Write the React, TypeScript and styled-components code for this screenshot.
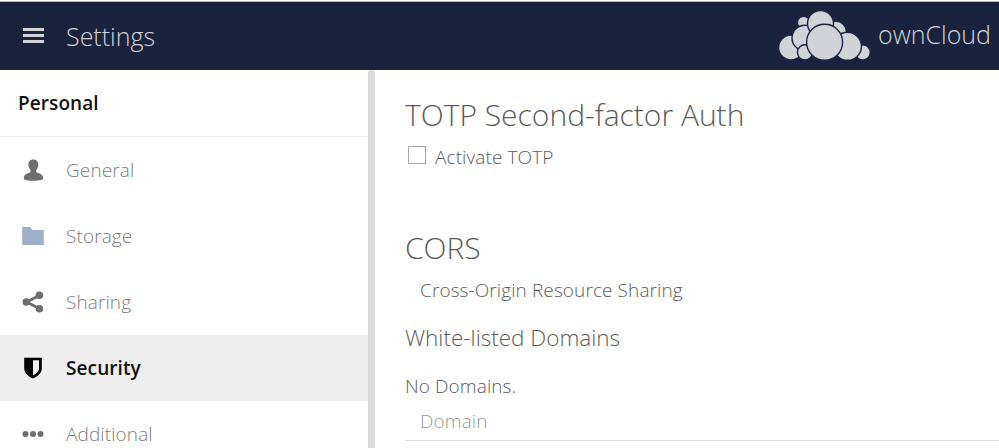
import React from "react";
import styled, { createGlobalStyle } from "styled-components";

const Global = createGlobalStyle`
  * { box-sizing: border-box; }
  body {
    margin: 0;
    background: #fff;
    overflow: hidden;
    font-family: "Open Sans", sans-serif;
    font-weight: 300;
  }
`;

const Page = styled.div`
  height: 448px;
  overflow: hidden;
  display: flex;
  flex-direction: column;
`;

const Header = styled.header`
  height: 70px;
  flex: none;
  background: #1b223d;
  border-top: 1px solid #fff;
  box-shadow: inset 0 1px 0 #b0b8c2;
  display: flex;
  align-items: center;
  color: #d2d3d8;
  padding: 1px 0 0 23px;
`;

const MenuButton = styled.button`
  width: 21px;
  height: 15px;
  margin-bottom: 1px;
  padding: 0;
  border: 0;
  background: none;
  display: flex;
  flex-direction: column;
  justify-content: space-between;
`;

const MenuBar = styled.span`
  width: 21px;
  height: 3px;
  background: #d2d3d8;
`;

const Title = styled.span`
  font-size: 25px;
  line-height: 34px;
  margin-left: 22px;
  flex: 1;
`;

const Brand = styled.div`
  display: flex;
  align-items: center;
  width: 220px;
  gap: 8px;
  white-space: nowrap;
`;

const BrandName = styled.span`
  font-size: 25px;
  line-height: 34px;
  padding-bottom: 4px;
`;

const Logo = styled.svg`
  width: 91px;
  height: 52px;
  flex: none;
  fill: #d2d3d8;
  stroke: #1b223d;
  stroke-width: 1.4;
`;

const Body = styled.div`
  flex: 1;
  display: flex;
  min-height: 0;
`;

const Sidebar = styled.nav`
  width: 368px;
  flex: none;
  overflow: hidden;
`;

const Group = styled.div`
  height: 67px;
  border-bottom: 1px solid #eee;
  padding-left: 18px;
  font-size: 19px;
  letter-spacing: 0.08px;
  line-height: 66px;
  font-weight: 600;
  color: #111;
`;

const Item = styled.a<{ $active?: boolean }>`
  height: 66px;
  display: flex;
  align-items: center;
  gap: 22px;
  padding-left: 22px;
  font-size: 19px;
  letter-spacing: 0.1px;
  color: ${p => (p.$active ? "#111" : "#7c7c7c")};
  font-weight: ${p => (p.$active ? 600 : 300)};
  background: ${p => (p.$active ? "#eee" : "transparent")};
`;

const Icon = styled.svg`
  width: 22px;
  height: 22px;
  flex: none;
  fill: #6e6e6e;
`;

const Divider = styled.div`
  width: 7px;
  flex: none;
  background: #dcdcdc;
  border-radius: 3px 3px 0 0;
`;

const Main = styled.main`
  flex: 1;
  padding: 24px 0 0 30px;
  color: #5c5c5c;
  font-size: 19px;
  letter-spacing: 0.1px;
  line-height: 26px;
`;

const Heading = styled.h2`
  margin: 0;
  font-weight: 300;
  font-size: 30px;
  letter-spacing: 0;
  line-height: 42px;
`;

const SubHeading = styled.h3`
  margin: 19px 0 0;
  font-weight: 300;
  font-size: 22.5px;
  letter-spacing: 0;
  line-height: 32px;
`;

const CheckRow = styled.label`
  display: flex;
  align-items: center;
  margin-top: 8px;
  gap: 9px;
  padding-left: 3px;
`;

const Box = styled.span`
  width: 18px;
  height: 18px;
  border: 1px solid #a6a6a6;
  margin-bottom: 4px;
`;

const Cors = styled.section`
  margin-top: 57px;
`;

const Description = styled.p`
  margin: 8px 0 0 15px;
`;

const Empty = styled.p`
  margin: 19px 0 0;
`;

const Domain = styled.input`
  display: block;
  width: 100%;
  height: 42px;
  padding: 2px 15px 0;
  border: 0;
  border-bottom: 1px solid #dcdcdc;
  outline: 0;
  background: none;
  font: inherit;
  letter-spacing: inherit;
  &::placeholder { color: #999; opacity: 1; }
`;

export default function App() {
  return (
    <Page>
      <Global />
      <Header>
        <MenuButton aria-label="Menu"><MenuBar /><MenuBar /><MenuBar /></MenuButton>
        <Title>Settings</Title>
        <Brand>
          <Logo viewBox="779 10 91 52">
            <circle cx="803.7" cy="22.5" r="6.3" />
            <circle cx="835.5" cy="32" r="11" />
            <circle cx="791" cy="47.5" r="12.4" />
            <circle cx="804.8" cy="38" r="12.8" />
            <circle cx="820.5" cy="23.5" r="13" />
            <circle cx="862.7" cy="52.3" r="7.6" />
            <circle cx="847.5" cy="46.3" r="14" />
            <circle cx="805" cy="52.3" r="7.6" />
            <circle cx="824.6" cy="42.3" r="18" />
          </Logo>
          <BrandName>ownCloud</BrandName>
        </Brand>
      </Header>
      <Body>
        <Sidebar>
          <Group>Personal</Group>
          <Item>
            <Icon viewBox="0 0 22 22">
              <path d="M11.3.4c3.2 0 5 2.1 5 5.2 0 2.5-.8 4-1.8 5.3-.4.6-.4 1.8.2 2.3 1.8 1.2 6.500 1.600 6.500 6 0 1.200-1.600 2.500-9.900 2.500s-9.500-1.300-9.500-2.500c0-4.400 4.600-4.800 6.300-6 .6-.5.6-1.7.2-2.3-1.1-1.3-1.900-2.800-1.900-5.300C6.400 2.500 8.200.4 11.300.4z" />
            </Icon>
            General
          </Item>
          <Item>
            <Icon viewBox="0 0 22 22"><path fill="#a0afc8" d="M.2 2h8.100l2 3H21.800v15H.2V2z" /></Icon>
            Storage
          </Item>
          <Item>
            <Icon viewBox="0 0 22 22">
              <path d="M17.5 4.500 4.500 11l13 6.500" fill="none" stroke="#6e6e6e" strokeWidth="3" />
              <circle cx="17.4" cy="4.3" r="3.8" />
              <circle cx="4.3" cy="11" r="3.8" />
              <circle cx="17.4" cy="17.8" r="3.8" />
            </Icon>
            Sharing
          </Item>
          <Item $active>
            <Icon viewBox="0 0 22 22">
              <path fill="#000" fillRule="evenodd" d="M2.2.7h17.6v11c0 4.500-4.500 7.500-8.800 9.800C6.700 19.200 2.200 16.200 2.200 11.700zM11 3.200v15.200c3-1.800 6-3.900 6-7.200v-8z" />
            </Icon>
            Security
          </Item>
          <Item>
            <Icon viewBox="0 0 22 22">
              <circle cx="3.5" cy="11" r="3" />
              <circle cx="11" cy="11" r="3" />
              <circle cx="18.5" cy="11" r="3" />
            </Icon>
            Additional
          </Item>
        </Sidebar>
        <Divider />
        <Main>
          <Heading>TOTP Second-factor Auth</Heading>
          <CheckRow><Box />Activate TOTP</CheckRow>
          <Cors>
            <Heading>CORS</Heading>
            <Description>Cross-Origin Resource Sharing</Description>
            <SubHeading>White-listed Domains</SubHeading>
            <Empty>No Domains.</Empty>
            <Domain placeholder="Domain" />
          </Cors>
        </Main>
      </Body>
    </Page>
  );
}
